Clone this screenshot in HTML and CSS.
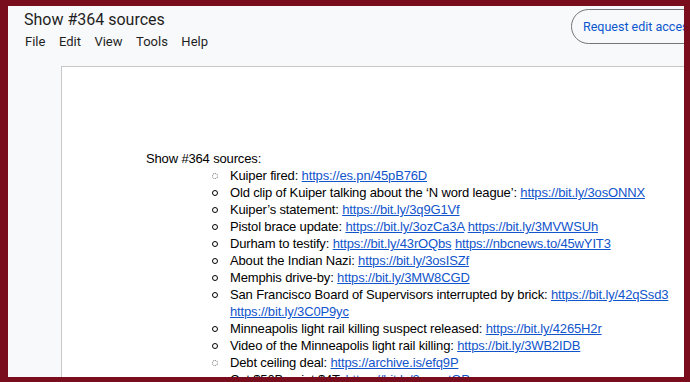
FILE: index.html
```html
<!DOCTYPE html>
<html lang="en">
<head>
    <meta charset="UTF-8">
    <meta name="viewport" content="width=device-width, initial-scale=1.0">
    <title>Show #364 sources</title>
    <link rel="stylesheet" href="styles.css">
</head>
<body>

<div class="app">
    <div class="topbar">
        <div class="doc-head">
            <div class="doc-title">Show #364 sources</div>
            <div class="menu">
                <span>File</span>
                <span>Edit</span>
                <span>View</span>
                <span>Tools</span>
                <span>Help</span>
            </div>
        </div>
        <button class="access-btn">Request edit access</button>
    </div>

    <div class="canvas">
        <div class="page">
            <p class="intro">Show #364 sources:</p>
            <ul class="sources">
                <li class="odd-dot"><span class="dot"></span><span>Kuiper fired: <a href="#">https://es.pn/45pB76D</a></span></li>
                <li><span class="dot"></span><span>Old clip of Kuiper talking about the ‘N word league’: <a href="#">https://bit.ly/3osONNX</a></span></li>
                <li><span class="dot"></span><span>Kuiper’s statement: <a href="#">https://bit.ly/3q9G1Vf</a></span></li>
                <li><span class="dot"></span><span>Pistol brace update: <a href="#">https://bit.ly/3ozCa3A</a> <a href="#">https://bit.ly/3MVWSUh</a></span></li>
                <li><span class="dot"></span><span>Durham to testify: <a href="#">https://bit.ly/43rOQbs</a> <a href="#">https://nbcnews.to/45wYIT3</a></span></li>
                <li><span class="dot"></span><span>About the Indian Nazi: <a href="#">https://bit.ly/3osISZf</a></span></li>
                <li><span class="dot"></span><span>Memphis drive-by: <a href="#">https://bit.ly/3MW8CGD</a></span></li>
                <li><span class="dot"></span><span>San Francisco Board of Supervisors interrupted by brick: <a href="#">https://bit.ly/42qSsd3</a> <a href="#">https://bit.ly/3C0P9yc</a></span></li>
                <li><span class="dot"></span><span>Minneapolis light rail killing suspect released: <a href="#">https://bit.ly/4265H2r</a></span></li>
                <li><span class="dot"></span><span>Video of the Minneapolis light rail killing: <a href="#">https://bit.ly/3WB2IDB</a></span></li>
                <li class="odd-dot"><span class="dot"></span><span>Debt ceiling deal: <a href="#">https://archive.is/efq9P</a></span></li>
                <li><span class="dot"></span><span>Cut $50B, print $4T: <a href="#">https://bit.ly/3ogeatQP</a></span></li>
            </ul>
        </div>
    </div>
</div>

</body>
</html>
```

FILE: styles.css
```css
body {
    margin: 0;
    padding: 6px 6px 5px 8px;
    background-color: #7a0d1d;
    height: 382px;
    box-sizing: border-box;
    overflow: hidden;
}
.app {
    background-color: #f8f9fa;
    height: 100%;
    overflow: hidden;
    font-family: Roboto, "Liberation Sans", sans-serif;
    color: #1f1f1f;
}
.topbar {
    display: grid;
    grid-template-columns: 547px auto;
    height: 60px;
    padding-left: 16px;
}
.doc-title {
    font-size: 16px;
    line-height: 24px;
    padding-top: 2px;
}
.menu {
    display: flex;
    gap: 13.5px;
    font-size: 13px;
    line-height: 18px;
    margin-top: 1px;
    padding-left: 1px;
}
.access-btn {
    align-self: start;
    margin-top: 3px;
    height: 35px;
    width: 140px;
    padding: 0 11px;
    text-align: left;
    white-space: nowrap;
    background: transparent;
    border: 1px solid #747775;
    border-radius: 18px;
    color: #0b57d0;
    font-family: Roboto, sans-serif;
    font-size: 12.5px;
}
.canvas {
    padding-left: 53px;
}
.page {
    background-color: #fff;
    border: 1px solid #c7c7c7;
    width: 700px;
    height: 400px;
    padding: 83px 0 0 84px;
    font-family: "Liberation Sans", Arial, sans-serif;
    font-size: 13px;
    letter-spacing: -0.15px;
    line-height: 17px;
    color: #000;
}
.intro {
    margin: 0;
}
.sources {
    list-style: none;
    margin: 0 0 0 61px;
    padding: 0;
    width: 475px;
}
.sources li {
    display: flex;
}
.dot {
    flex: none;
    width: 4px;
    height: 4px;
    border: 1px solid #000;
    border-radius: 50%;
    margin: 6px 12px 0 5px;
}
.odd-dot .dot {
    border-style: dotted;
    border-color: #777;
}
.sources a {
    color: #1155cc;
}
```
